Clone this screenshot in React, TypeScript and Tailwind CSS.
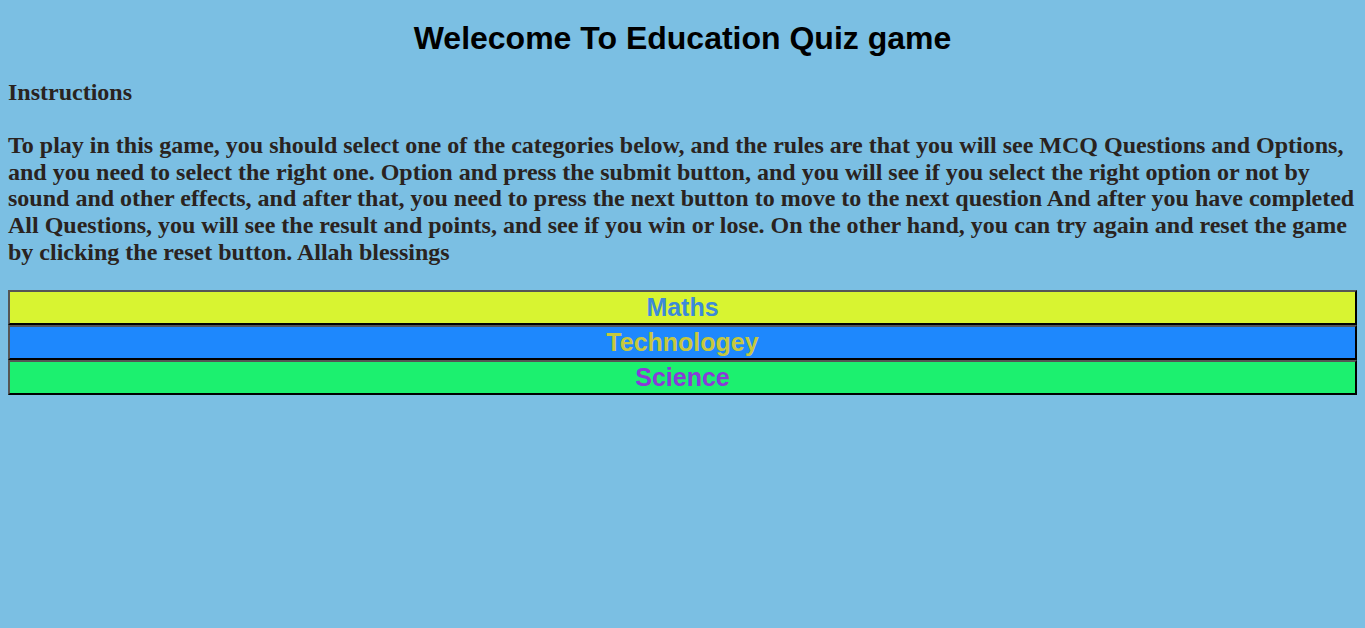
import React from 'react';

const categories = [
  { name: 'Maths', bg: 'bg-[#d8f431]', fg: 'text-[#3d8ad8]' },
  { name: 'Technologey', bg: 'bg-[#1e88fd]', fg: 'text-[#c7c83d]' },
  { name: 'Science', bg: 'bg-[#1cf06f]', fg: 'text-[#8a3ad8]' },
];

const App: React.FC = () => {
  return (
    <div className="min-h-screen bg-[#7bbfe3] px-2 pt-[20px]">
      {/* Title */}
      <h1 className="text-center font-['Liberation_Sans',Arial,sans-serif] text-[32px] font-bold leading-[37px] text-black">
        Welecome To Education Quiz game
      </h1>

      {/* Instructions */}
      <div className="mt-[22px] font-['Liberation_Serif','Times_New_Roman',serif] text-[24px] font-bold leading-[26.75px] text-[#2a2320]">
        <h3>Instructions</h3>
        <p className="mt-[26px]">
          To play in this game, you should select one of the categories below, and the rules are that you will see MCQ
          Questions and Options, and you need to select the right one. Option and press the submit button, and you will
          see if you select the right option or not by sound and other effects, and after that, you need to press the next
          button to move to the next question And after you have completed All Questions, you will see the result and
          points, and see if you win or lose. On the other hand, you can try again and reset the game by clicking the
          reset button. Allah blessings
        </p>
      </div>

      {/* Categories */}
      <div className="mt-[24px] flex flex-col">
        {categories.map((c) => (
          <button
            key={c.name}
            className={`block h-[35px] w-full border-2 border-t-[#555] border-l-[#555] border-r-black border-b-black font-['Liberation_Sans',Arial,sans-serif] text-[25px] font-bold leading-none ${c.bg} ${c.fg}`}
          >
            {c.name}
          </button>
        ))}
      </div>
    </div>
  );
};

export default App;
